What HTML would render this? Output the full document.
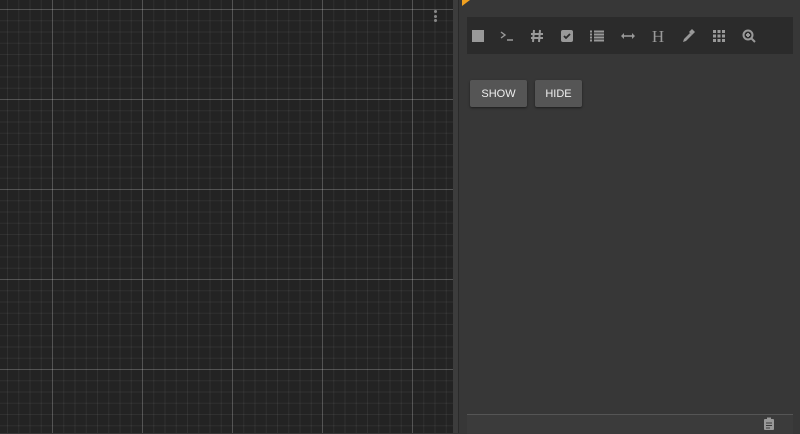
<!DOCTYPE html>
<html><head><style>
body{margin:0;width:800px;height:433px;overflow:hidden;background:#373737;font-family:"Liberation Sans",sans-serif;position:relative}
#cv{position:absolute;left:0;top:0;width:453px;height:433px;background-color:#232323;
background-image:
linear-gradient(90deg,rgba(255,255,255,0.17) 1px,transparent 1px),
linear-gradient(0deg,rgba(255,255,255,0.17) 1px,transparent 1px),
linear-gradient(90deg,rgba(255,255,255,0.06) 1px,transparent 1px),
linear-gradient(0deg,rgba(255,255,255,0.06) 1px,transparent 1px);
background-size:90px 90px,90px 90px,11.25px 11.25px,11.25px 11.25px;
background-position:52px 10px,52px 10px,52px 10px,52px 10px}
.dot{position:absolute;left:434px;width:3px;height:3px;border-radius:50%;background:#888}
#bar{position:absolute;left:453px;top:0;width:5px;height:433px;background:#3c3c3c;border-right:1px solid #2a2a2a}
#tri{position:absolute;left:462px;top:0;width:0;height:0;border-left:8px solid #f0a020;border-top:0;border-bottom:6px solid transparent}
#tb{position:absolute;left:467px;top:17px;width:326px;height:37px;background:#2b2b2b}
#tb svg{position:absolute;top:11px}
.btn{position:absolute;top:80px;height:27px;background:#555;color:#eee;font-size:11px;line-height:29px;text-align:center;box-shadow:0 1px 2px rgba(0,0,0,.5);border-radius:2px}
#bot{position:absolute;left:467px;top:414px;width:326px;height:19px;background:#3b3b3b;border-top:1px solid #555}
</style></head><body>
<div id="cv"></div>
<div class="dot" style="top:10px"></div><div class="dot" style="top:15px"></div><div class="dot" style="top:19px"></div>
<div id="bar"></div>
<div id="tri"></div>
<div id="tb">
<svg style="left:4px" width="14" height="16" viewBox="0 0 14 16"><rect x="1" y="2" width="12" height="12" fill="#999"/></svg>
<svg style="left:32px" width="16" height="16" viewBox="0 0 16 16"><path d="M2 4l4 3-4 3M8 12h6" stroke="#999" stroke-width="1.4" fill="none"/></svg>
<svg style="left:62px" width="16" height="16" viewBox="0 0 16 16"><path d="M5 2L4 14M11 2L10 14M2 6h12M2 10h12" stroke="#999" stroke-width="2" fill="none"/></svg>
<svg style="left:92px" width="16" height="16" viewBox="0 0 16 16"><rect x="2" y="2" width="12" height="12" rx="2" fill="#999"/><path d="M5 8l2 2 4-4" stroke="#2b2b2b" stroke-width="1.8" fill="none"/></svg>
<svg style="left:122px" width="16" height="16" viewBox="0 0 16 16"><path d="M1 3.5h2M5 3.5h10M1 6.5h2M5 6.5h10M1 9.5h2M5 9.5h10M1 12.5h2M5 12.5h10" stroke="#999" stroke-width="2"/></svg>
<svg style="left:153px" width="16" height="16" viewBox="0 0 16 16"><path d="M3 8h10" stroke="#999" stroke-width="1.6"/><path d="M1 8l3-3v6zM15 8l-3-3v6z" fill="#999"/></svg>
<svg style="left:183px" width="16" height="16" viewBox="0 0 16 16"><text x="8" y="14" text-anchor="middle" font-family="Liberation Serif" font-size="17" fill="#999">H</text></svg>
<svg style="left:213px" width="16" height="16" viewBox="0 0 16 16"><path d="M3 14l1-3 6-6 2 2-6 6z" fill="#999"/><path d="M9 4l3-3 3 3-3 3z" fill="#999"/></svg>
<svg style="left:244px" width="16" height="16" viewBox="0 0 16 16"><path d="M2 2h3v3H2zM6.5 2h3v3h-3zM11 2h3v3h-3zM2 6.5h3v3H2zM6.5 6.5h3v3h-3zM11 6.5h3v3h-3zM2 11h3v3H2zM6.5 11h3v3h-3zM11 11h3v3h-3z" fill="#999"/></svg>
<svg style="left:274px" width="16" height="16" viewBox="0 0 16 16"><circle cx="7" cy="7" r="4.5" stroke="#999" stroke-width="2" fill="none"/><path d="M10 10l4 4M5 7h4M7 5v4" stroke="#999" stroke-width="2"/></svg>
</div>
<div class="btn" style="left:470px;width:57px">SHOW</div>
<div class="btn" style="left:535px;width:47px">HIDE</div>
<div id="bot"><svg style="position:absolute;left:296px;top:2px" width="12" height="14" viewBox="0 0 12 14"><rect x="1" y="2" width="10" height="11" rx="1" fill="#999"/><rect x="4" y="0.5" width="4" height="3" fill="#999"/><path d="M3 6h6M3 8.5h6M3 11h4" stroke="#3b3b3b" stroke-width="1"/></svg></div>
</body></html>
